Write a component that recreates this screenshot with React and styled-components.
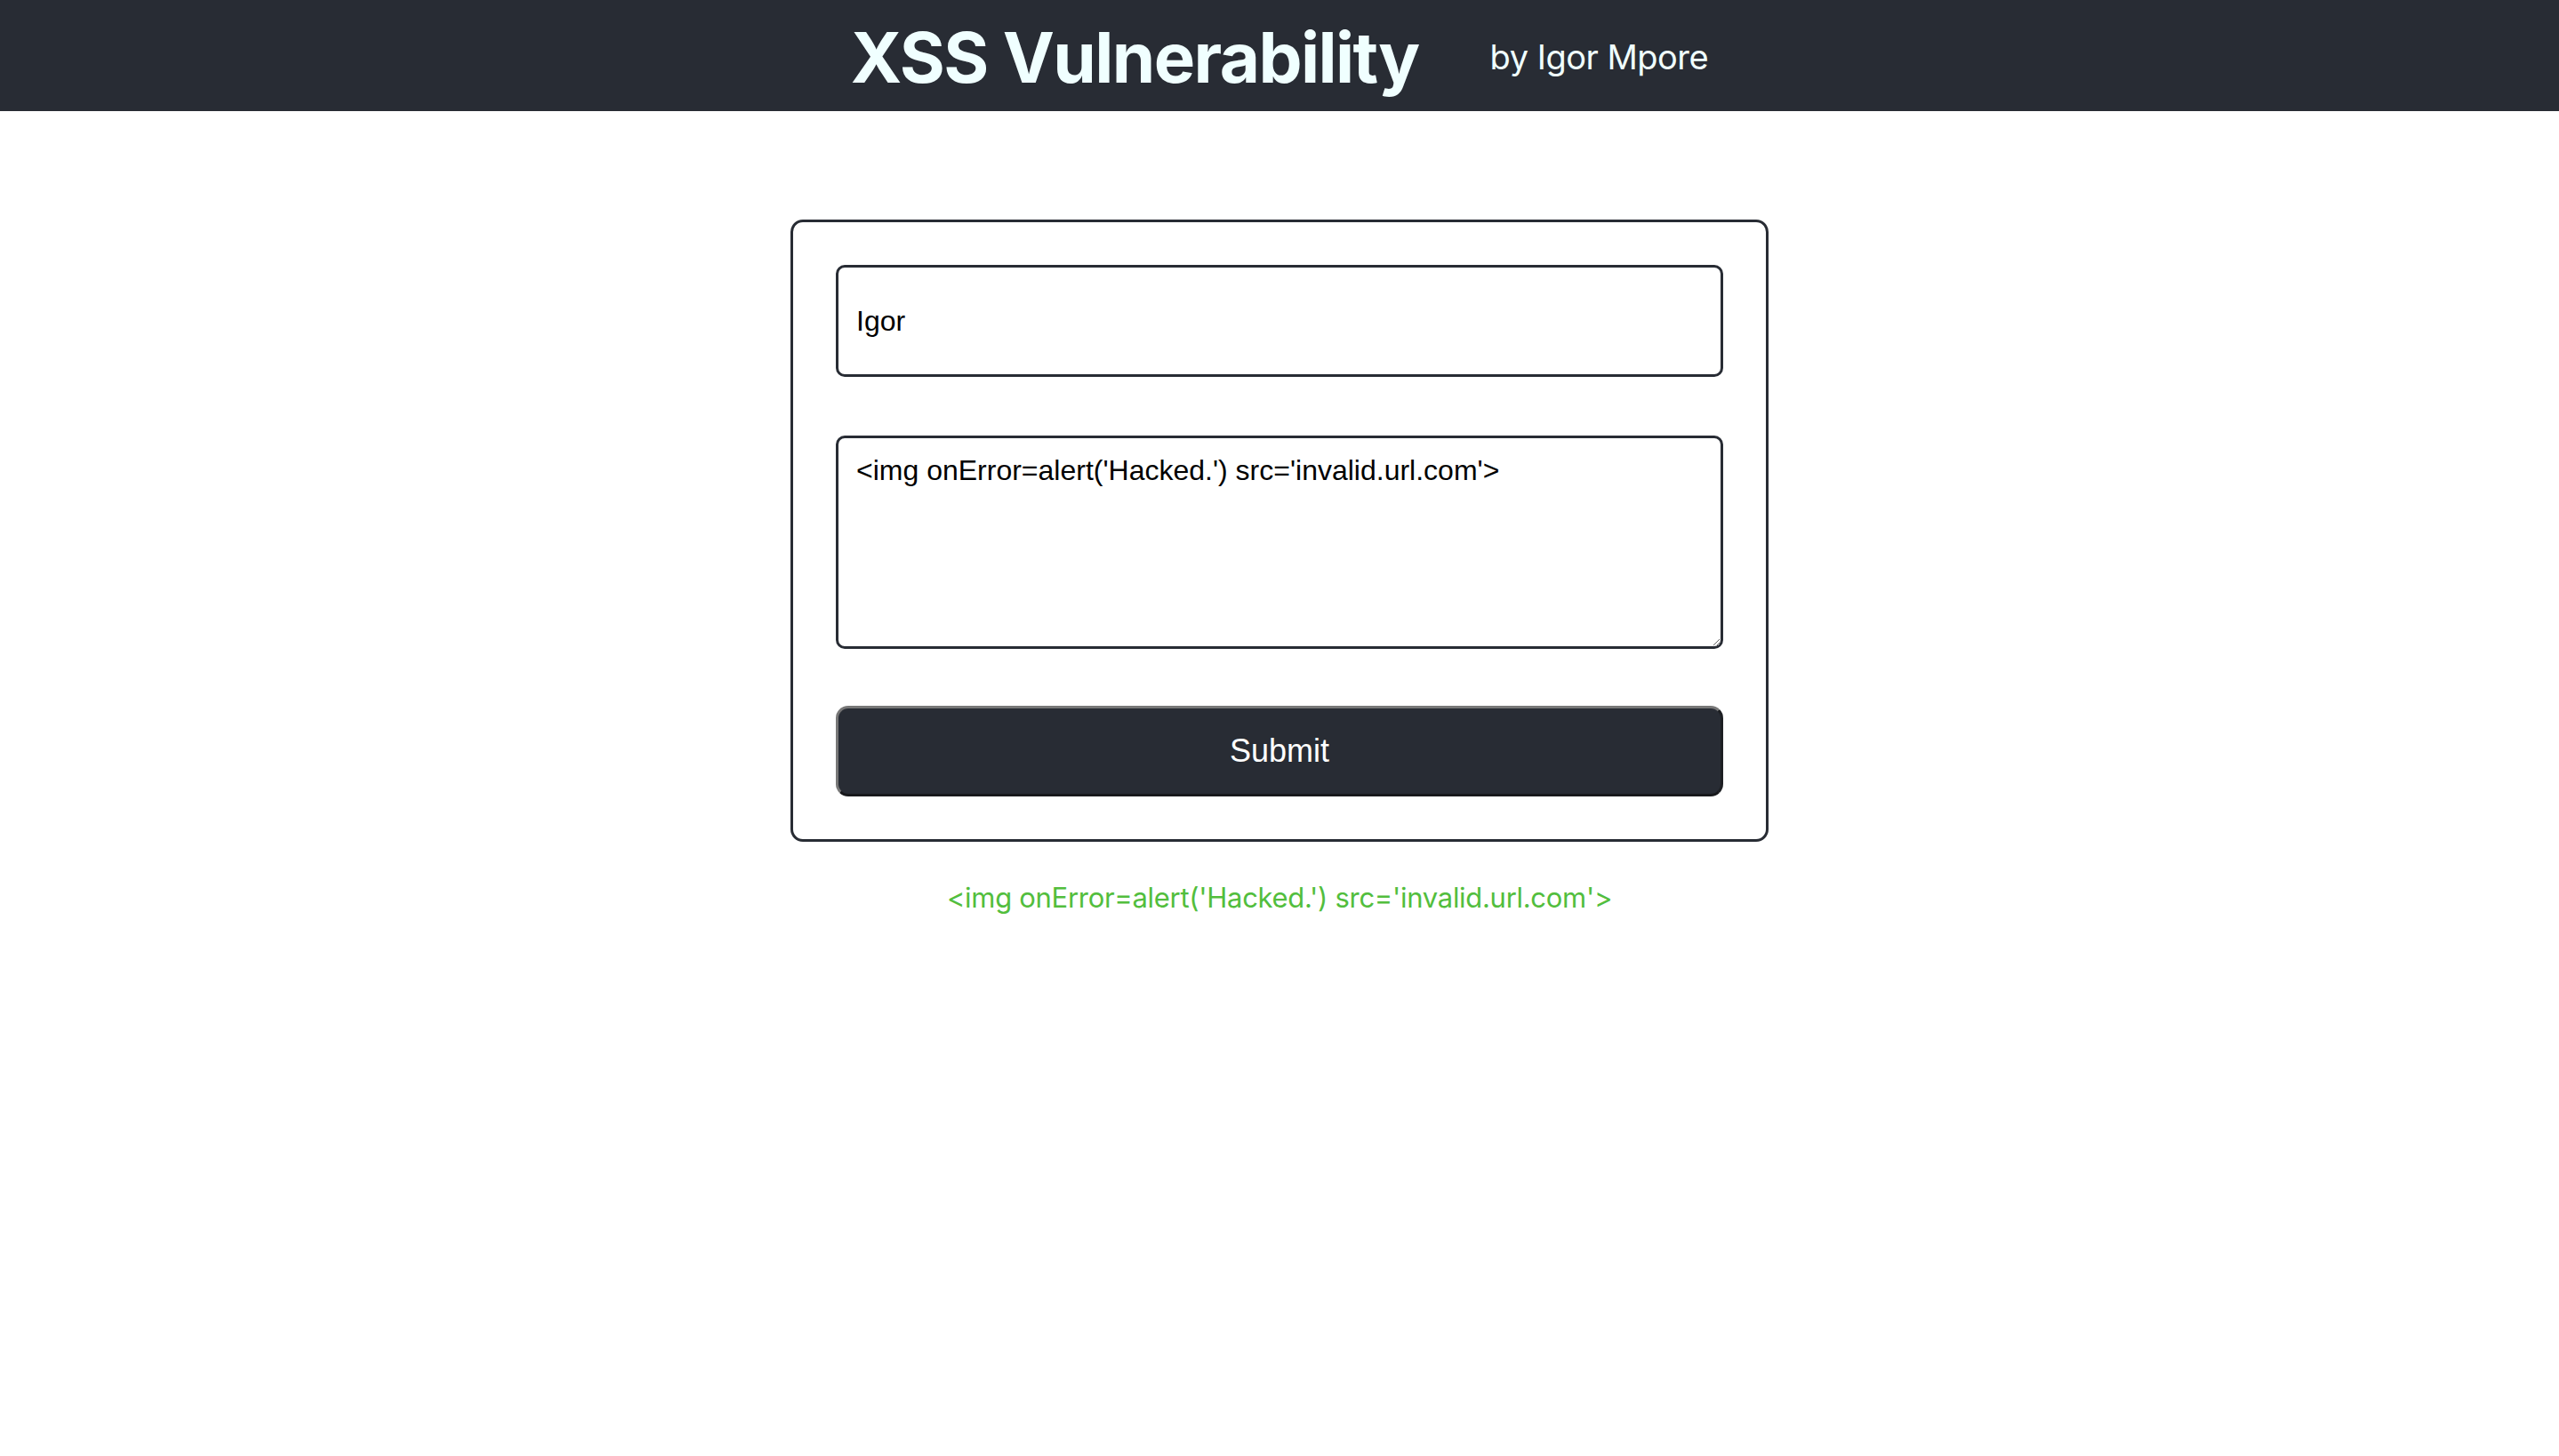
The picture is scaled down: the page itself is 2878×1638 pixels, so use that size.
import React, { useState } from "react";
import styled, { createGlobalStyle } from "styled-components";

const GlobalStyle = createGlobalStyle`
  html, body {
    margin: 0;
    padding: 0;
    background: #ffffff;
  }
  * {
    box-sizing: border-box;
  }
`;

const Page = styled.div`
  min-height: 100vh;
  display: flex;
  flex-direction: column;
  align-items: center;
  font-family: Inter, "Noto Sans", sans-serif;
`;

const Header = styled.header`
  width: 100%;
  height: 125px;
  background: #282c34;
  display: flex;
  align-items: center;
  justify-content: center;
  gap: 80px;
  color: #f0ffff;
`;

const Title = styled.h1`
  margin: 0;
  font-size: 78px;
  font-weight: 700;
  letter-spacing: -1.6px;
  line-height: 1;
  padding-top: 4px;
`;

const Author = styled.span`
  font-size: 38px;
  font-weight: 400;
  letter-spacing: -0.5px;
  padding-top: 2px;
`;

const Card = styled.form`
  margin-top: 122px;
  width: 1100px;
  padding: 48px;
  border: 3px solid #282c34;
  border-radius: 14px;
  display: flex;
  flex-direction: column;
  gap: 66px;
`;

const Field = styled.input`
  width: 100%;
  height: 126px;
  padding: 0 20px;
  border: 3px solid #282c34;
  border-radius: 10px;
  font-family: "Liberation Sans", Arial, sans-serif;
  font-size: 32px;
  color: #000;
  outline: none;
`;

const Area = styled.textarea`
  width: 100%;
  height: 240px;
  padding: 18px 20px;
  border: 3px solid #282c34;
  border-radius: 10px;
  font-family: "Liberation Sans", Arial, sans-serif;
  font-size: 32px;
  line-height: 1.15;
  color: #000;
  outline: none;
`;

const Submit = styled.button`
  width: 100%;
  height: 102px;
  margin-top: -2px;
  background: #282c34;
  color: #ffffff;
  border: 3px solid;
  border-color: #777777 #1d1f23 #18191c #777777;
  border-radius: 14px;
  font-family: "Liberation Sans", Arial, sans-serif;
  font-size: 36px;
  cursor: pointer;
`;

const Output = styled.p`
  margin: 44px 0 0;
  color: #52be3d;
  font-size: 31px;
  letter-spacing: -0.3px;
`;

export default function App() {
  const [name, setName] = useState("Igor");
  const [comment, setComment] = useState(
    "<img onError=alert('Hacked.') src='invalid.url.com'>"
  );

  return (
    <Page>
      <GlobalStyle />
      <Header>
        <Title>XSS Vulnerability</Title>
        <Author>by Igor Mpore</Author>
      </Header>
      <Card onSubmit={(e) => e.preventDefault()}>
        <Field value={name} onChange={(e) => setName(e.target.value)} />
        <Area value={comment} onChange={(e) => setComment(e.target.value)} />
        <Submit type="submit">Submit</Submit>
      </Card>
      <Output>{comment}</Output>
    </Page>
  );
}
